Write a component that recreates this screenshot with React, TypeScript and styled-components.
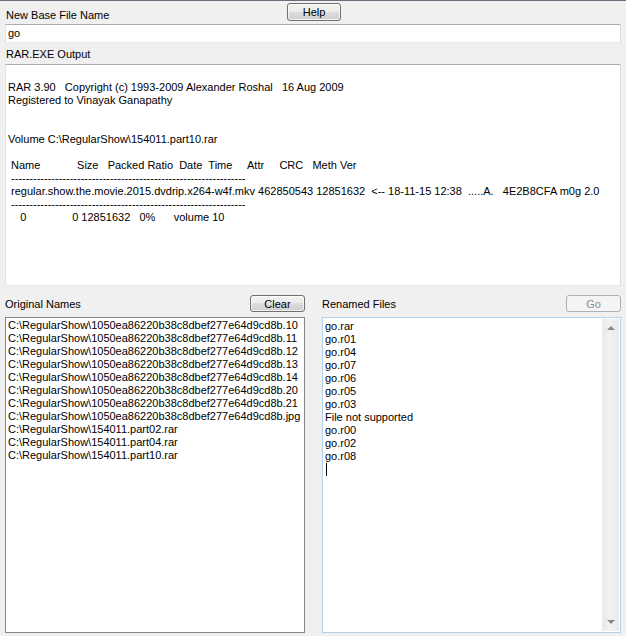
import styled, { createGlobalStyle } from "styled-components";

const GlobalStyle = createGlobalStyle`
  html, body {
    margin: 0;
    padding: 0;
    background: #f0f0f0;
  }
  body {
    font-family: "Liberation Sans", Arial, sans-serif;
    font-size: 11px;
    color: #000;
  }
`;

const outputLines = [
  "",
  "RAR 3.90   Copyright (c) 1993-2009 Alexander Roshal   16 Aug 2009",
  "Registered to Vinayak Ganapathy",
  "",
  "",
  "Volume C:\\RegularShow\\154011.part10.rar",
  "",
  " Name            Size   Packed Ratio  Date  Time     Attr     CRC   Meth Ver",
  " " + "-".repeat(64),
  " regular.show.the.movie.2015.dvdrip.x264-w4f.mkv 462850543 12851632  <-- 18-11-15 12:38  .....A.   4E2B8CFA m0g 2.0",
  " " + "-".repeat(64),
  "    0               0 12851632   0%      volume 10",
];

const originalNames = [
  "C:\\RegularShow\\1050ea86220b38c8dbef277e64d9cd8b.10",
  "C:\\RegularShow\\1050ea86220b38c8dbef277e64d9cd8b.11",
  "C:\\RegularShow\\1050ea86220b38c8dbef277e64d9cd8b.12",
  "C:\\RegularShow\\1050ea86220b38c8dbef277e64d9cd8b.13",
  "C:\\RegularShow\\1050ea86220b38c8dbef277e64d9cd8b.14",
  "C:\\RegularShow\\1050ea86220b38c8dbef277e64d9cd8b.20",
  "C:\\RegularShow\\1050ea86220b38c8dbef277e64d9cd8b.21",
  "C:\\RegularShow\\1050ea86220b38c8dbef277e64d9cd8b.jpg",
  "C:\\RegularShow\\154011.part02.rar",
  "C:\\RegularShow\\154011.part04.rar",
  "C:\\RegularShow\\154011.part10.rar",
];

const renamedFiles = [
  "go.rar",
  "go.r01",
  "go.r04",
  "go.r07",
  "go.r06",
  "go.r05",
  "go.r03",
  "File not supported",
  "go.r00",
  "go.r02",
  "go.r08",
];

const App = () => {
  return (
    <>
      <GlobalStyle />
      <Window>
        <TopRow>
          <Label>New Base File Name</Label>
          <Button>Help</Button>
        </TopRow>
        <TextInput>go</TextInput>
        <SectionLabel>RAR.EXE Output</SectionLabel>
        <OutputBox>
          {outputLines.map((line, i) => (
            <Line key={i}>{line || "\u00a0"}</Line>
          ))}
        </OutputBox>
        <Columns>
          <Column>
            <ColumnHeader>
              <Label>Original Names</Label>
              <Button>Clear</Button>
            </ColumnHeader>
            <ListBox>
              {originalNames.map((name) => (
                <Line key={name}>{name}</Line>
              ))}
            </ListBox>
          </Column>
          <Column>
            <ColumnHeader>
              <Label>Renamed Files</Label>
              <Button disabled>Go</Button>
            </ColumnHeader>
            <MemoBox>
              <MemoText>
                {renamedFiles.map((name) => (
                  <Line key={name}>{name}</Line>
                ))}
                <Line>
                  <Caret />
                </Line>
              </MemoText>
              <ScrollBar>
                <Arrow $dir="up" />
                <Arrow $dir="down" />
              </ScrollBar>
            </MemoBox>
          </Column>
        </Columns>
      </Window>
    </>
  );
};

export default App;

const Window = styled.div`
  width: 626px;
  height: 636px;
  box-sizing: border-box;
  border-top: 1px solid #66717d;
  padding: 0 5px 3px 5px;
  display: flex;
  flex-direction: column;
  background: #f0f0f0;
`;

const TopRow = styled.div`
  height: 23px;
  display: grid;
  grid-template-columns: 282px 54px 1fr;
  align-items: start;
`;

const Label = styled.div`
  padding: 8px 0 0 1px;
  line-height: 13px;
  white-space: nowrap;
`;

const Button = styled.button`
  height: 18px;
  width: 54px;
  margin-top: 2px;
  padding: 0;
  box-sizing: border-box;
  font-family: "Liberation Sans", Arial, sans-serif;
  font-size: 11px;
  color: #000;
  border: 1px solid #707070;
  border-radius: 3px;
  background: linear-gradient(
    to bottom,
    #f2f2f2 0%,
    #ebebeb 49%,
    #dddddd 50%,
    #cfcfcf 100%
  );
  box-shadow: inset 0 0 0 1px rgba(255, 255, 255, 0.7);

  &:disabled {
    color: #8d8d8d;
    border-color: #adb2b5;
    background: #f4f4f4;
    box-shadow: none;
  }
`;

const Field = styled.div`
  box-sizing: border-box;
  background: #fff;
  border: 1px solid #e3e9ef;
  border-top-color: #abadb3;
  border-left-color: #e2e3ea;
  border-right-color: #dbdfe6;
`;

const TextInput = styled(Field)`
  height: 19px;
  padding: 2px 3px 0 2px;
  line-height: 13px;
`;

const SectionLabel = styled.div`
  height: 21px;
  padding: 5px 0 0 1px;
  box-sizing: border-box;
  line-height: 13px;
`;

const OutputBox = styled(Field)`
  height: 222px;
  padding: 3px 2px 0 2px;
  overflow: hidden;
`;

const Line = styled.div`
  height: 13px;
  line-height: 13px;
  white-space: pre;
`;

const Columns = styled.div`
  flex: 1;
  display: grid;
  grid-template-columns: 300px 299px;
  column-gap: 17px;
`;

const Column = styled.div`
  display: flex;
  flex-direction: column;
  min-height: 0;
`;

const ColumnHeader = styled.div`
  height: 31px;
  display: flex;
  justify-content: space-between;
  align-items: flex-start;
  padding-top: 5px;
  box-sizing: border-box;

  ${Label} {
    padding: 7px 0 0 0;
  }

  ${Button} {
    margin-top: 4px;
    height: 17px;
    width: 55px;
  }
`;

const ListBox = styled.div`
  flex: 1;
  background: #fff;
  border: 1px solid #828790;
  padding: 1px 2px;
  overflow: hidden;
`;

const MemoBox = styled.div`
  flex: 1;
  display: flex;
  background: #fff;
  border: 1px solid #b2d2ec;
  overflow: hidden;
`;

const MemoText = styled.div`
  flex: 1;
  padding: 2px 2px;
`;

const Caret = styled.span`
  display: inline-block;
  width: 1px;
  height: 13px;
  background: #000;
  margin-left: 1px;
`;

const ScrollBar = styled.div`
  width: 16px;
  margin: 1px 1px 1px 0;
  background: linear-gradient(to right, #e9e9e9, #f2f2f2 40%, #e9e9e9);
  border-left: 1px solid #ececec;
  display: flex;
  flex-direction: column;
  justify-content: space-between;
  align-items: center;
  padding: 7px 0 7px;
`;

const Arrow = styled.div<{ $dir: "up" | "down" }>`
  width: 0;
  height: 0;
  border-left: 4px solid transparent;
  border-right: 4px solid transparent;
  ${(p) =>
    p.$dir === "up"
      ? "border-bottom: 4px solid #8a8a8a;"
      : "border-top: 4px solid #8a8a8a;"}
`;
